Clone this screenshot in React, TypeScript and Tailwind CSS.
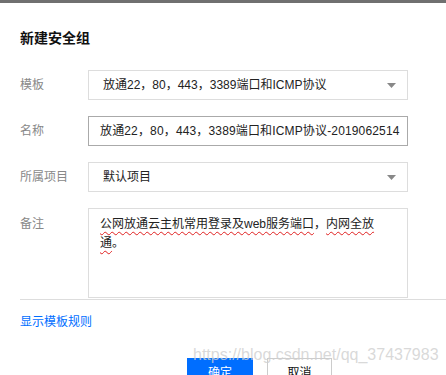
const font = { fontFamily: '"Liberation Sans", "Noto Sans CJK SC", sans-serif' };

function Caret() {
  return (
    <svg width="9" height="5" viewBox="0 0 9 5" className="shrink-0">
      <path d="M0 0 H9 L4.5 5 Z" fill="#888888" />
    </svg>
  );
}

function Row({ label, children }: { label: string; children: React.ReactNode }) {
  return (
    <div className="flex items-center">
      <div className="w-[68px] shrink-0 text-[12px] text-[#888888]">{label}</div>
      {children}
    </div>
  );
}

function Select({ value }: { value: string }) {
  return (
    <div className="flex h-[30px] w-[320px] items-center justify-between border border-[#dddddd] pl-[14px] pr-[11px] text-[12px] text-[#222222]">
      <span>{value}</span>
      <Caret />
    </div>
  );
}

const wavy = 'underline decoration-wavy decoration-[#e02020] decoration-1 underline-offset-[3px]';

export default function App() {
  return (
    <div className="relative h-[375px] w-full overflow-hidden bg-white" style={font}>
      <div className="h-[3px] bg-[#707070]" />

      <div className="pl-[20px]">
        <h1 className="mt-[25px] text-[14px] font-bold leading-[20px] text-[#111111]">新建安全组</h1>

        <div className="mt-[22px] flex flex-col gap-[16px]">
          <Row label="模板">
            <Select value="放通22，80，443，3389端口和ICMP协议" />
          </Row>

          <Row label="名称">
            <div className="flex h-[30px] w-[320px] items-center overflow-hidden whitespace-nowrap border border-[#aaaaaa] pl-[11px] text-[12px] text-[#222222]">
              <span className="tracking-[0.15px]">放通22，80，443，3389端口和ICMP协议-2019062514</span>
            </div>
          </Row>

          <Row label="所属项目">
            <Select value="默认项目" />
          </Row>

          <div className="flex items-start">
            <div className="w-[68px] shrink-0 pt-[7px] text-[12px] leading-[18px] text-[#888888]">备注</div>
            <div className="h-[90px] w-[320px] border border-[#dddddd] pl-[11px] pt-[6px] text-[12px] leading-[19px] text-[#222222]">
              <span className={wavy}>公网放通云主机常用登录及web服务端口</span>，<span className={wavy}>内网全放</span>
              <br />
              <span className={wavy}>通</span>。
            </div>
          </div>
        </div>

        <div className="mt-[1px] h-px bg-[#dddddd]" />

        <div className="mt-[14px] text-[12px] leading-[16px] text-[#006eff]">显示模板规则</div>
      </div>

      <div className="mt-[28px] flex gap-[14px] pl-[187px]">
        <button className="h-[30px] w-[66px] bg-[#006eff] text-[12px] text-white">确定</button>
        <button className="h-[30px] w-[65px] border border-[#cccccc] bg-white text-[12px] text-[#111111]">取消</button>
      </div>

      <div className="pointer-events-none absolute left-[193px] top-[345px] whitespace-nowrap text-[16px] leading-[20px] text-[#cfcfcf]/80">
        https://blog.csdn.net/qq_37437983
      </div>
    </div>
  );
}
